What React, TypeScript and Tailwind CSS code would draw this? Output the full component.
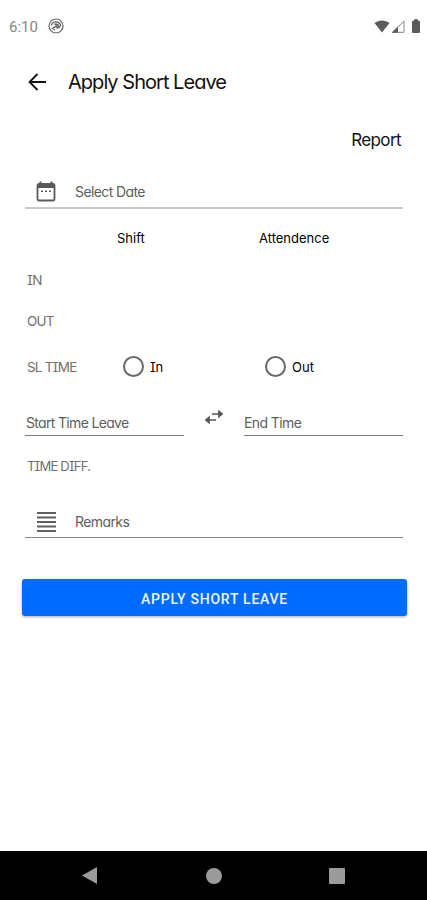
import React from 'react';

function StatusBar() {
  return (
    <header className="flex h-[52px] items-center pl-[9px] pr-[7px] text-[#666]">
      <span className="w-[39px] pt-[2px] font-[Roboto] text-[15px] leading-none tracking-[0px] text-[#858585]">6:10</span>
      <svg className="h-4 w-4" viewBox="0 0 16 16" fill="none" stroke="currentColor">
        <circle cx="8" cy="8" r="7" strokeWidth="1.2" />
        <path d="M3.300 7.500C4.200 4.500 6.500 3.500 9 4s3.700 2.300 3.800 4.500" strokeWidth="1.300" />
        <path d="M6.500 6.500c2-.8 4 .3 5 3.500M7.500 7.500l2.500 3" strokeWidth="1.800" />
        <path d="M3.500 10l3.500 2M5 9.500l2.500-.5" strokeWidth="1.300" />
      </svg>
      <svg className="ml-auto h-[13px] w-[16px]" viewBox="0 0 16 13" fill="#5c5c5c">
        <path d="M0.5 3C4.8-0.4 11.2-0.4 15.5 3L8 12.5Z" />
      </svg>
      <svg className="ml-[1px] h-[13px] w-[14px]" viewBox="0 0 14 13">
        <path d="M1.5 12.3L13 1v11.3Z" fill="#fff" stroke="#858585" />
        <path d="M0.5 12.8L7 6.5v6.3Z" fill="#5c5c5c" />
      </svg>
      <svg className="ml-[7px] h-[14px] w-[8px]" viewBox="0 0 8 14" fill="#5c5c5c">
        <path d="M2.500 0h3v1L8 2.500V13c0 .5-.5 1-1 1H1c-.5 0-1-.5-1-1V2.500L2.500 1Z" />
      </svg>
    </header>
  );
}

function CalendarIcon() {
  return (
    <svg className="ml-[11px] h-[21px] w-[20px]" viewBox="0 0 20 21">
      <rect x="1.500" y="3" width="17" height="16.500" rx="1.500" fill="#fff" stroke="#5a5a5a" strokeWidth="1.800" />
      <path d="M1 3h18v4H1zM3.500 0.500h2v3h-2zM14.500 0.500h2v3h-2z" fill="#5a5a5a" />
      <path d="M5 9.500h2v1.500H5zM9 9.500h2v1.500H9zM13 9.500h2v1.500h-2z" fill="#5a5a5a" />
    </svg>
  );
}

function Radio({ label, className }: { label: string; className: string }) {
  return (
    <label className={`flex items-center gap-[6px] text-black ${className}`}>
      <span className="relative -top-px h-[21px] w-[21px] rounded-full border-2 border-[#686868]" />
      <span>{label}</span>
    </label>
  );
}

export default function App() {
  return (
    <div className="flex h-[900px] w-[427px] flex-col bg-white font-[Inter,sans-serif] text-[14px] leading-[20px] tracking-[-0.6px] text-[#5e5e5e] [font-feature-settings:'cv11','cv08']">
      <StatusBar />
      <div className="flex h-[60px] items-center pl-[28px] text-black">
        <svg className="h-[18px] w-[19px]" viewBox="0 0 19 18" fill="none" stroke="#111" strokeWidth="1.800">
          <path d="M18 9H1.500M9.500 1L1.500 9l8 8" />
        </svg>
        <h1 className="ml-[21px] whitespace-nowrap text-[20px] leading-[26px] tracking-[-0.97px] text-[#111]">Apply Short Leave</h1>
      </div>
      <main className="flex flex-1 flex-col pl-[25px] pr-[24px]">
        <div className="flex h-[56px] items-center justify-end pr-[2px] text-[17px] tracking-[-0.6px] text-[#111]">Report</div>
        <div className="flex h-[41px] items-center border-b-2 border-[#cbcbcb] pt-[8px]">
          <CalendarIcon />
          <span className="ml-[19px]">Select Date</span>
        </div>
        <div className="mt-[19px] flex h-[21px] text-[13px] tracking-[0px] text-black">
          <span className="ml-[92px] w-[142px]">Shift</span>
          <span>Attendence</span>
        </div>
        <div className="mt-[10px] flex h-[41px] items-center pl-[2px] text-[13.500px] tracking-[-0.8px] text-[#707070]">IN</div>
        <div className="flex h-[41px] items-center pl-[2px] text-[13.500px] tracking-[-0.8px] text-[#707070]">OUT</div>
        <div className="mt-[1px] flex h-[50px] items-center pl-[2px]">
          <span className="w-[96px] text-[13.500px] tracking-[-0.8px] text-[#707070]">SL TIME</span>
          <Radio label="In" className="w-[142px] text-[13px] tracking-[-0.3px]" />
          <Radio label="Out" className="text-[13px] tracking-[0px]" />
        </div>
        <div className="flex h-[44px] items-end">
          <div className="h-[23px] w-[159px] border-b border-[#7c7c7c] pl-[1px] tracking-[-0.67px]">Start Time Leave</div>
          <svg className="mb-[12px] ml-[20px] h-[14px] w-[20px]" viewBox="0 0 20 14" fill="none" stroke="#555" strokeWidth="1.700">
            <path d="M8 4h9M15 1.500L18 4l-3 2.500ZM12 10H3M5 7.500L2 10l3 2.500Z" />
          </svg>
          <div className="ml-auto h-[23px] w-[159px] border-b border-[#7c7c7c]">End Time</div>
        </div>
        <div className="mt-[20px] h-[20px] pl-[2px] text-[13px] tracking-[-0.8px] text-[#707070]">TIME DIFF.</div>
        <div className="mt-[31px] flex h-[31px] items-start border-b border-[#858585]">
          <svg className="ml-[12px] mt-[5px] h-[20px] w-[19px]" viewBox="0 0 19 20" stroke="#606060" strokeWidth="2">
            <path d="M0 1h19M0 5.500h19M0 10h19M0 14.500h19M0 19h19" />
          </svg>
          <span className="ml-[19px] mt-[5px]">Remarks</span>
        </div>
        <button className="-ml-[3px] -mr-[4px] mt-[41px] h-[37px] rounded-[3px] bg-[#006bff] pt-[2px] font-[Roboto] text-[14px] font-medium tracking-[0.75px] text-[#eef5ff] shadow-[0_1px_3px_rgba(0,0,0,0.35)]">
          APPLY SHORT LEAVE
        </button>
      </main>
      <nav className="flex h-[49px] items-center bg-black">
        <svg className="ml-[82px] h-[17px] w-[15px]" viewBox="0 0 15 17" fill="#9b9b9b"><path d="M0 8.500L15 0v17Z" /></svg>
        <span className="ml-[109px] h-[16px] w-[16px] rounded-full bg-[#9b9b9b]" />
        <span className="ml-[107px] h-[16px] w-[16px] rounded-[1px] bg-[#9b9b9b]" />
      </nav>
    </div>
  );
}
